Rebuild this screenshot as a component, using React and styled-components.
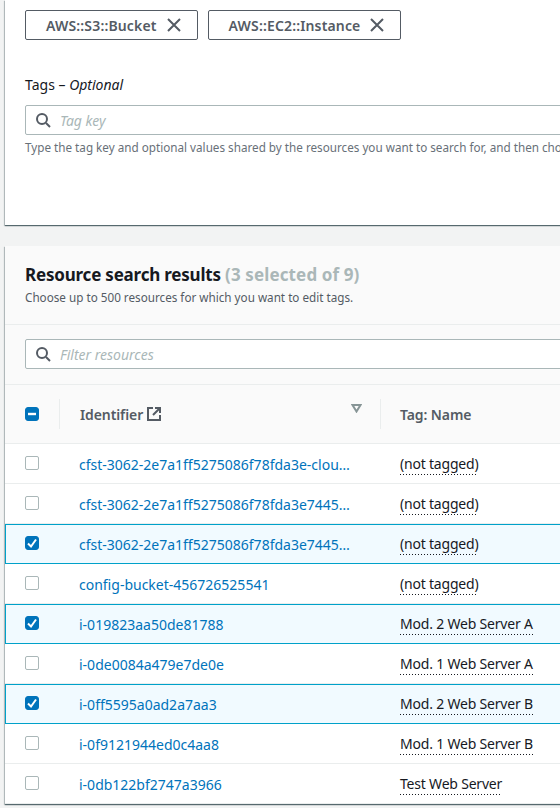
import React from "react";
import styled, { createGlobalStyle } from "styled-components";

const Global = createGlobalStyle`
  html, body { margin: 0; padding: 0; background: #f2f3f3; }
  body { width: 560px; height: 808px; overflow: hidden; font-family: "Noto Sans", "Open Sans", sans-serif; color: #16191f; }
`;

const Page = styled.div`
  width: 560px;
  height: 808px;
  overflow: hidden;
  padding-left: 5px;
  box-sizing: border-box;
  display: flex;
  flex-direction: column;
  gap: 21px;
`;

const Card = styled.section`
  width: 700px;
  background: #fff;
  box-shadow: 0 1px 1px 0 rgba(0, 28, 36, 0.5), 1px 1px 1px 0 rgba(0, 28, 36, 0.1), -1px 1px 1px 0 rgba(0, 28, 36, 0.2);
`;

const FormCard = styled(Card)`
  height: 225px;
  flex: none;
  box-sizing: border-box;
  padding: 10px 0 0 20px;
`;

const Chips = styled.div`
  display: flex;
  gap: 10px;
`;

const Chip = styled.div`
  height: 30px;
  box-sizing: border-box;
  border: 1px solid #545b64;
  border-radius: 2px;
  display: flex;
  align-items: center;
  padding: 0 15px 0 20px;
  gap: 9px;
  font-size: 14px;
  font-weight: 600;
  letter-spacing: 0.15px;
  color: #545b64;
`;

const FieldLabel = styled.div`
  margin-top: 35px;
  font-size: 14px;
  line-height: 20px;
  color: #16191f;
  em { font-style: italic; }
`;

const SearchBox = styled.div`
  height: 30px;
  box-sizing: border-box;
  border: 1px solid #aab7b8;
  border-radius: 2px;
  background: #fff;
  display: flex;
  align-items: center;
  gap: 9px;
  padding-left: 9px;
  font-size: 14px;
  font-style: italic;
  color: #aab7b8;
  margin-top: ${(p) => p.$top || 0}px;
  width: ${(p) => p.$width}px;
`;

const Hint = styled.div`
  margin-top: 4px;
  font-size: 11.7px;
  line-height: 16px;
  color: #687078;
  white-space: nowrap;
`;

const Results = styled(Card)`
  flex: none;
`;

const Header = styled.header`
  height: 79px;
  box-sizing: border-box;
  background: #fafafa;
  border-bottom: 1px solid #eaeded;
  padding: 17px 0 0 20px;
`;

const Title = styled.h2`
  margin: 0;
  font-size: 17px;
  line-height: 24px;
  font-weight: 700;
  letter-spacing: -0.2px;
  color: #16191f;
  span { color: #aab7b8; font-weight: 700; letter-spacing: 0.12px; }
`;

const Subtitle = styled.p`
  margin: 2px 0 0;
  font-size: 11.7px;
  line-height: 16px;
  color: #545b64;
`;

const FilterBar = styled.div`
  height: 60px;
  box-sizing: border-box;
  background: #fafafa;
  border-bottom: 1px solid #eaeded;
  padding: 14px 0 0 20px;
`;

const Columns = "54px 321px 1fr";

const HeadRow = styled.div`
  height: 59px;
  box-sizing: border-box;
  background: #fafafa;
  border-bottom: 1px solid #eaeded;
  display: grid;
  grid-template-columns: ${Columns};
  align-items: center;
  font-size: 14px;
  font-weight: 600;
  letter-spacing: -0.1px;
  color: #545b64;
`;

const HeadCell = styled.div`
  height: 30px;
  position: relative;
  display: flex;
  align-items: center;
  gap: 4px;
  padding-left: ${(p) => p.$pad}px;
  border-left: ${(p) => (p.$line ? "1px solid #eaeded" : "none")};
`;

const SortMark = styled.svg`
  position: absolute;
  right: 18px;
  top: 5px;
`;

const Row = styled.div`
  display: grid;
  grid-template-columns: ${Columns};
  align-items: center;
  font-size: 14px;
  height: 40px;
  background: ${(p) => (p.$selected ? "#f1faff" : "#fff")};
  box-shadow: ${(p) =>
    p.$selected
      ? "inset 1px 0 0 #00a1c9, inset 0 1px 0 #00a1c9, inset 0 -1px 0 #00a1c9"
      : "inset 0 -1px 0 #eaeded"};
`;

const BoxCell = styled.div`
  padding-left: 20px;
  display: flex;
`;

const Box = styled.span`
  width: 14px;
  height: 14px;
  box-sizing: border-box;
  border-radius: ${(p) => (p.$on ? "3px" : "2px")};
  display: flex;
  align-items: center;
  justify-content: center;
  background: ${(p) => (p.$on ? "#0073bb" : "#fff")};
  border: 1px solid ${(p) => (p.$on ? "#0073bb" : "#aab7b8")};
  margin-top: ${(p) => p.$shift || 0}px;
`;

const LinkCell = styled.a`
  color: #0073bb;
  padding-left: 20px;
  white-space: nowrap;
  overflow: hidden;
  text-overflow: ellipsis;
  min-width: 0;
  box-sizing: border-box;
  padding-right: 26px;
`;

const TagCell = styled.div`
  padding-left: 20px;
`;

const TagText = styled.span`
  display: inline-block;
  color: #16191f;
  letter-spacing: -0.2px;
  line-height: 20px;
  padding-bottom: 1px;
  background: repeating-linear-gradient(90deg, #16191f 0 1px, transparent 1px 3px) left bottom / 100% 1px no-repeat;
`;

const SearchIcon = () => (
  <svg width="16" height="16" viewBox="0 0 16 16" fill="none" stroke="#545b64" strokeWidth="2">
    <circle cx="7" cy="7" r="5" />
    <path d="M11 11l4 4" />
  </svg>
);

const CloseIcon = () => (
  <svg width="16" height="16" viewBox="0 0 16 16" fill="none" stroke="#545b64" strokeWidth="2">
    <path d="M2 2l12 12M14 2L2 14" />
  </svg>
);

const ExternalIcon = () => (
  <svg width="14" height="14" viewBox="0 0 14 14" fill="none" stroke="#545b64" strokeWidth="2">
    <path d="M6 1H1v12h12V8" />
    <path d="M8 1h5v5M13 1L6 8" />
  </svg>
);

const Check = () => (
  <svg width="12" height="12" viewBox="0 0 12 12" fill="none" stroke="#fff" strokeWidth="2">
    <path d="M2 6.5l3 3 5-7" />
  </svg>
);

const Dash = () => (
  <svg width="12" height="12" viewBox="0 0 12 12" fill="none" stroke="#fff" strokeWidth="2.4">
    <path d="M2 6h8" />
  </svg>
);

const rows = [
  ["cfst-3062-2e7a1ff5275086f78fda3e-cloudtrail-logs", "(not tagged)", false],
  ["cfst-3062-2e7a1ff5275086f78fda3e7445-access-logs", "(not tagged)", false],
  ["cfst-3062-2e7a1ff5275086f78fda3e7445-config-logs", "(not tagged)", true],
  ["config-bucket-456726525541", "(not tagged)", false],
  ["i-019823aa50de81788", "Mod. 2 Web Server A", true],
  ["i-0de0084a479e7de0e", "Mod. 1 Web Server A", false],
  ["i-0ff5595a0ad2a7aa3", "Mod. 2 Web Server B", true],
  ["i-0f9121944ed0c4aa8", "Mod. 1 Web Server B", false],
  ["i-0db122bf2747a3966", "Test Web Server", false],
];

export default function App() {
  return (
    <>
      <Global />
      <Page>
        <FormCard>
          <Chips>
            <Chip>AWS::S3::Bucket <CloseIcon /></Chip>
            <Chip>AWS::EC2::Instance <CloseIcon /></Chip>
          </Chips>
          <FieldLabel>Tags – <em>Optional</em></FieldLabel>
          <SearchBox $top={10} $width={660}><SearchIcon />Tag key</SearchBox>
          <Hint>Type the tag key and optional values shared by the resources you want to search for, and then choose Search resources.</Hint>
        </FormCard>
        <Results>
          <Header>
            <Title>Resource search results <span>(3 selected of 9)</span></Title>
            <Subtitle>Choose up to 500 resources for which you want to edit tags.</Subtitle>
          </Header>
          <FilterBar>
            <SearchBox $width={660}><SearchIcon />Filter resources</SearchBox>
          </FilterBar>
          <HeadRow>
            <BoxCell><Box $on><Dash /></Box></BoxCell>
            <HeadCell $pad={20} $line>
              Identifier <ExternalIcon />
              <SortMark width="11" height="9" viewBox="0 0 11 9" fill="none" stroke="#879596" strokeWidth="2">
                <path d="M1.5 1h8L5.5 7.5z" />
              </SortMark>
            </HeadCell>
            <HeadCell $pad={19} $line>Tag: Name</HeadCell>
          </HeadRow>
          {rows.map(([id, tag, selected]) => (
            <Row key={id} $selected={selected}>
              <BoxCell><Box $on={selected} $shift={-2}>{selected && <Check />}</Box></BoxCell>
              <LinkCell>{id}</LinkCell>
              <TagCell><TagText>{tag}</TagText></TagCell>
            </Row>
          ))}
        </Results>
      </Page>
    </>
  );
}
